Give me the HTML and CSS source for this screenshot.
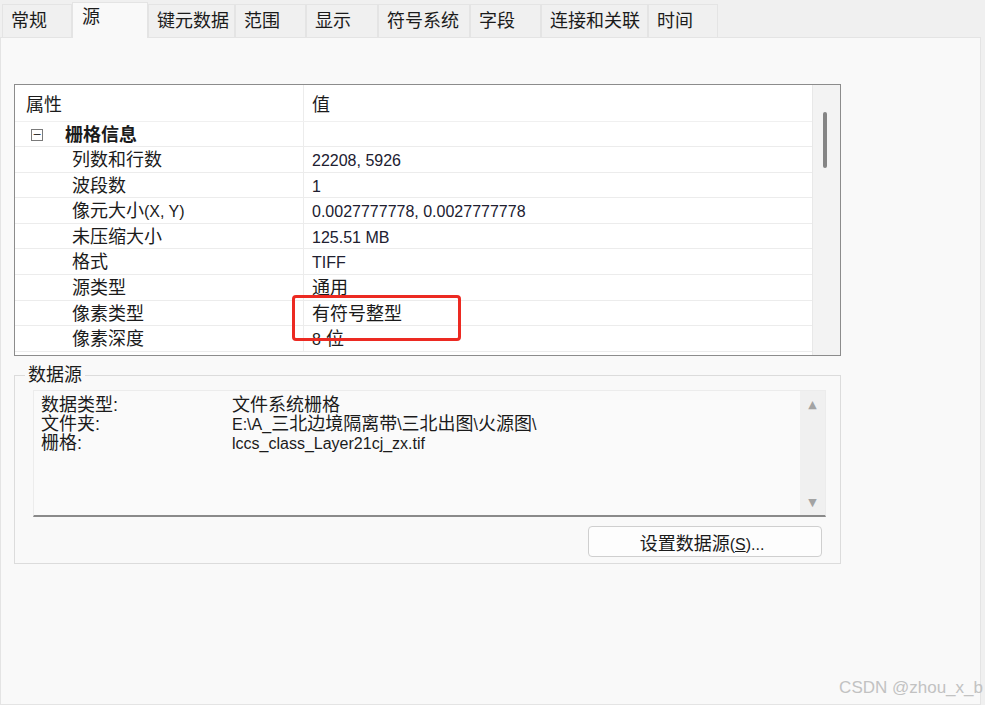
FILE: index.html
```html
<!DOCTYPE html>
<html lang="zh-CN">
<head>
  <meta charset="UTF-8">
  <title>图层属性 - 源</title>
  <link rel="stylesheet" href="styles.css">
</head>
<body>
  <div class="window">
    <div class="tabs">
      <div class="tab" style="width: 70px">常规</div>
      <div class="tab active" style="width: 76px">源</div>
      <div class="tab" style="width: 87px">键元数据</div>
      <div class="tab" style="width: 71px">范围</div>
      <div class="tab" style="width: 72px">显示</div>
      <div class="tab" style="width: 92px">符号系统</div>
      <div class="tab" style="width: 71px">字段</div>
      <div class="tab" style="width: 107px">连接和关联</div>
      <div class="tab" style="width: 70px">时间</div>
    </div>

    <div class="panel">
      <div class="grid">
        <div class="grid-body">
          <div class="grid-head">
            <div class="cell name">属性</div>
            <div class="cell value">值</div>
          </div>
          <div class="row group">
            <div class="cell name">
              <span class="toggle">−</span>
              <span class="group-title">栅格信息</span>
            </div>
            <div class="cell value"></div>
          </div>
          <div class="row"><div class="cell name indent">列数和行数</div><div class="cell value latin">22208, 5926</div></div>
          <div class="row"><div class="cell name indent">波段数</div><div class="cell value latin">1</div></div>
          <div class="row"><div class="cell name indent">像元大小<span class="en">(X, Y)</span></div><div class="cell value latin">0.0027777778, 0.0027777778</div></div>
          <div class="row"><div class="cell name indent">未压缩大小</div><div class="cell value latin">125.51 MB</div></div>
          <div class="row"><div class="cell name indent">格式</div><div class="cell value latin">TIFF</div></div>
          <div class="row"><div class="cell name indent">源类型</div><div class="cell value">通用</div></div>
          <div class="row"><div class="cell name indent">像素类型</div><div class="cell value">有符号整型</div></div>
          <div class="row"><div class="cell name indent">像素深度</div><div class="cell value"><span class="en">8</span> 位</div></div>
          <div class="highlight"></div>
        </div>
        <div class="vscroll">
          <div class="thumb"></div>
        </div>
      </div>

      <fieldset class="datasource">
        <legend>数据源</legend>
        <div class="info-box">
          <div class="info-lines">
            <div class="info-row"><span class="info-key">数据类型:</span><span>文件系统栅格</span></div>
            <div class="info-row"><span class="info-key">文件夹:</span><span><span class="en">E:\A_</span>三北边境隔离带<span class="en">\</span>三北出图<span class="en">\</span>火源图<span class="en">\</span></span></div>
            <div class="info-row"><span class="info-key">栅格:</span><span class="en">lccs_class_Layer21cj_zx.tif</span></div>
          </div>
          <div class="info-scroll">
            <span class="arrow">▲</span>
            <span class="arrow">▼</span>
          </div>
        </div>
        <div class="actions">
          <button class="btn">设置数据源<span class="en">(<u>S</u>)...</span></button>
        </div>
      </fieldset>
    </div>
  </div>

  <div class="watermark">CSDN @zhou_x_b</div>
</body>
</html>
```

FILE: styles.css
```css
* {
  margin: 0;
  padding: 0;
  box-sizing: border-box;
}

body {
  width: 985px;
  height: 705px;
  overflow: hidden;
  background-color: #f0f0f0;
  font-family: "Liberation Sans", "Noto Sans CJK SC", sans-serif;
  font-size: 18px;
  color: #1b1b1b;
  position: relative;
}

.en {
  font-size: 16px;
}

.tabs {
  display: flex;
  align-items: flex-end;
  height: 37px;
  padding-left: 2px;
}

.tab {
  height: 33px;
  border: 1px solid #e4e4e4;
  border-bottom: none;
  background-color: #f0f0f0;
  font-size: 18px;
  line-height: 33px;
  padding-left: 8px;
  color: #1b1b1b;
}

.tab.active {
  height: 36px;
  background-color: #f9f9f9;
  line-height: 29px;
  padding-left: 9px;
  margin-bottom: -1px;
  position: relative;
  z-index: 1;
}

.panel {
  width: 981px;
  height: 668px;
  background-color: #f9f9f9;
  border: 1px solid #e4e4e4;
  padding: 46px 0 0 13px;
}

/* property grid */
.grid {
  display: flex;
  width: 827px;
  height: 272px;
  border: 1px solid #8c8c8c;
  background-color: #ffffff;
}

.grid-body {
  flex: 1;
  position: relative;
  overflow: hidden;
}

.grid-head {
  display: flex;
  height: 37px;
  border-bottom: 1px solid #f0f0f0;
}

.grid-head .cell {
  line-height: 38px;
}

.grid-head .name {
  border-right: 1px solid #e6e6e6;
}

.row {
  display: flex;
  height: 25.6px;
  border-bottom: 1px solid #ececec;
}

.cell {
  font-size: 18px;
  line-height: 25px;
  padding-top: 1px;
  white-space: nowrap;
}

.cell.name {
  width: 289px;
  padding-left: 11px;
  border-right: 1px solid #ececec;
}

.cell.value {
  flex: 1;
  padding-left: 8px;
}

.cell.latin {
  font-size: 16px;
  color: #202030;
}

.cell.indent {
  padding-left: 57px;
}

.row.group {
  height: 25px;
}

.toggle {
  display: inline-block;
  width: 12px;
  height: 12px;
  border: 1px solid #7a7a7a;
  font-family: "DejaVu Sans", sans-serif;
  font-size: 11px;
  line-height: 9px;
  text-align: center;
  vertical-align: middle;
  margin: -3px 0 0 5px;
  color: #333;
}

.group-title {
  font-weight: bold;
  margin-left: 17px;
}

.highlight {
  position: absolute;
  left: 277px;
  top: 210px;
  width: 169px;
  height: 46px;
  border: 3px solid #ec2a22;
  border-radius: 4px;
}

.vscroll {
  width: 28px;
  background-color: #f3f3f3;
  border-left: 1px solid #e8e8e8;
  padding-top: 27px;
}

.thumb {
  width: 4px;
  height: 56px;
  margin-left: 10px;
  border-radius: 2px;
  background-color: #858585;
}

/* data source group */
.datasource {
  width: 827px;
  height: 199px;
  margin-top: 9px;
  border: 1px solid #dcdcdc;
  padding: 0 14px 0 18px;
}

.datasource legend {
  font-size: 18px;
  padding: 0 3px;
  margin-left: -8px;
  line-height: 20px;
}

.info-box {
  display: flex;
  height: 127px;
  margin-top: 5px;
  background-color: #fafafa;
  border: 1px solid #ececec;
  border-bottom: 2px solid #8a8a8a;
}

.info-lines {
  flex: 1;
  padding: 5px 0 0 7px;
  font-size: 18px;
  line-height: 19px;
}

.info-row {
  display: flex;
  height: 19px;
}

.info-key {
  width: 191px;
}

.info-scroll {
  width: 25px;
  background-color: #f0f0f0;
  display: flex;
  flex-direction: column;
  justify-content: space-between;
  align-items: center;
  padding: 6px 0 4px;
}

.arrow {
  font-family: "DejaVu Sans", sans-serif;
  font-size: 11px;
  color: #a3a3a3;
  line-height: 16px;
}

.actions {
  display: flex;
  justify-content: flex-end;
  padding: 9px 4px 0 0;
}

.btn {
  width: 234px;
  height: 31px;
  border: 1px solid #cfcfcf;
  border-radius: 4px;
  background-color: #fdfdfd;
  font-family: "Liberation Sans", "Noto Sans CJK SC", sans-serif;
  font-size: 18px;
  padding-right: 6px;
  color: #1b1b1b;
}

.watermark {
  position: absolute;
  right: 2px;
  bottom: 7px;
  font-family: "Liberation Sans", Arial, sans-serif;
  font-size: 17px;
  color: #c2c2c2;
}
```
